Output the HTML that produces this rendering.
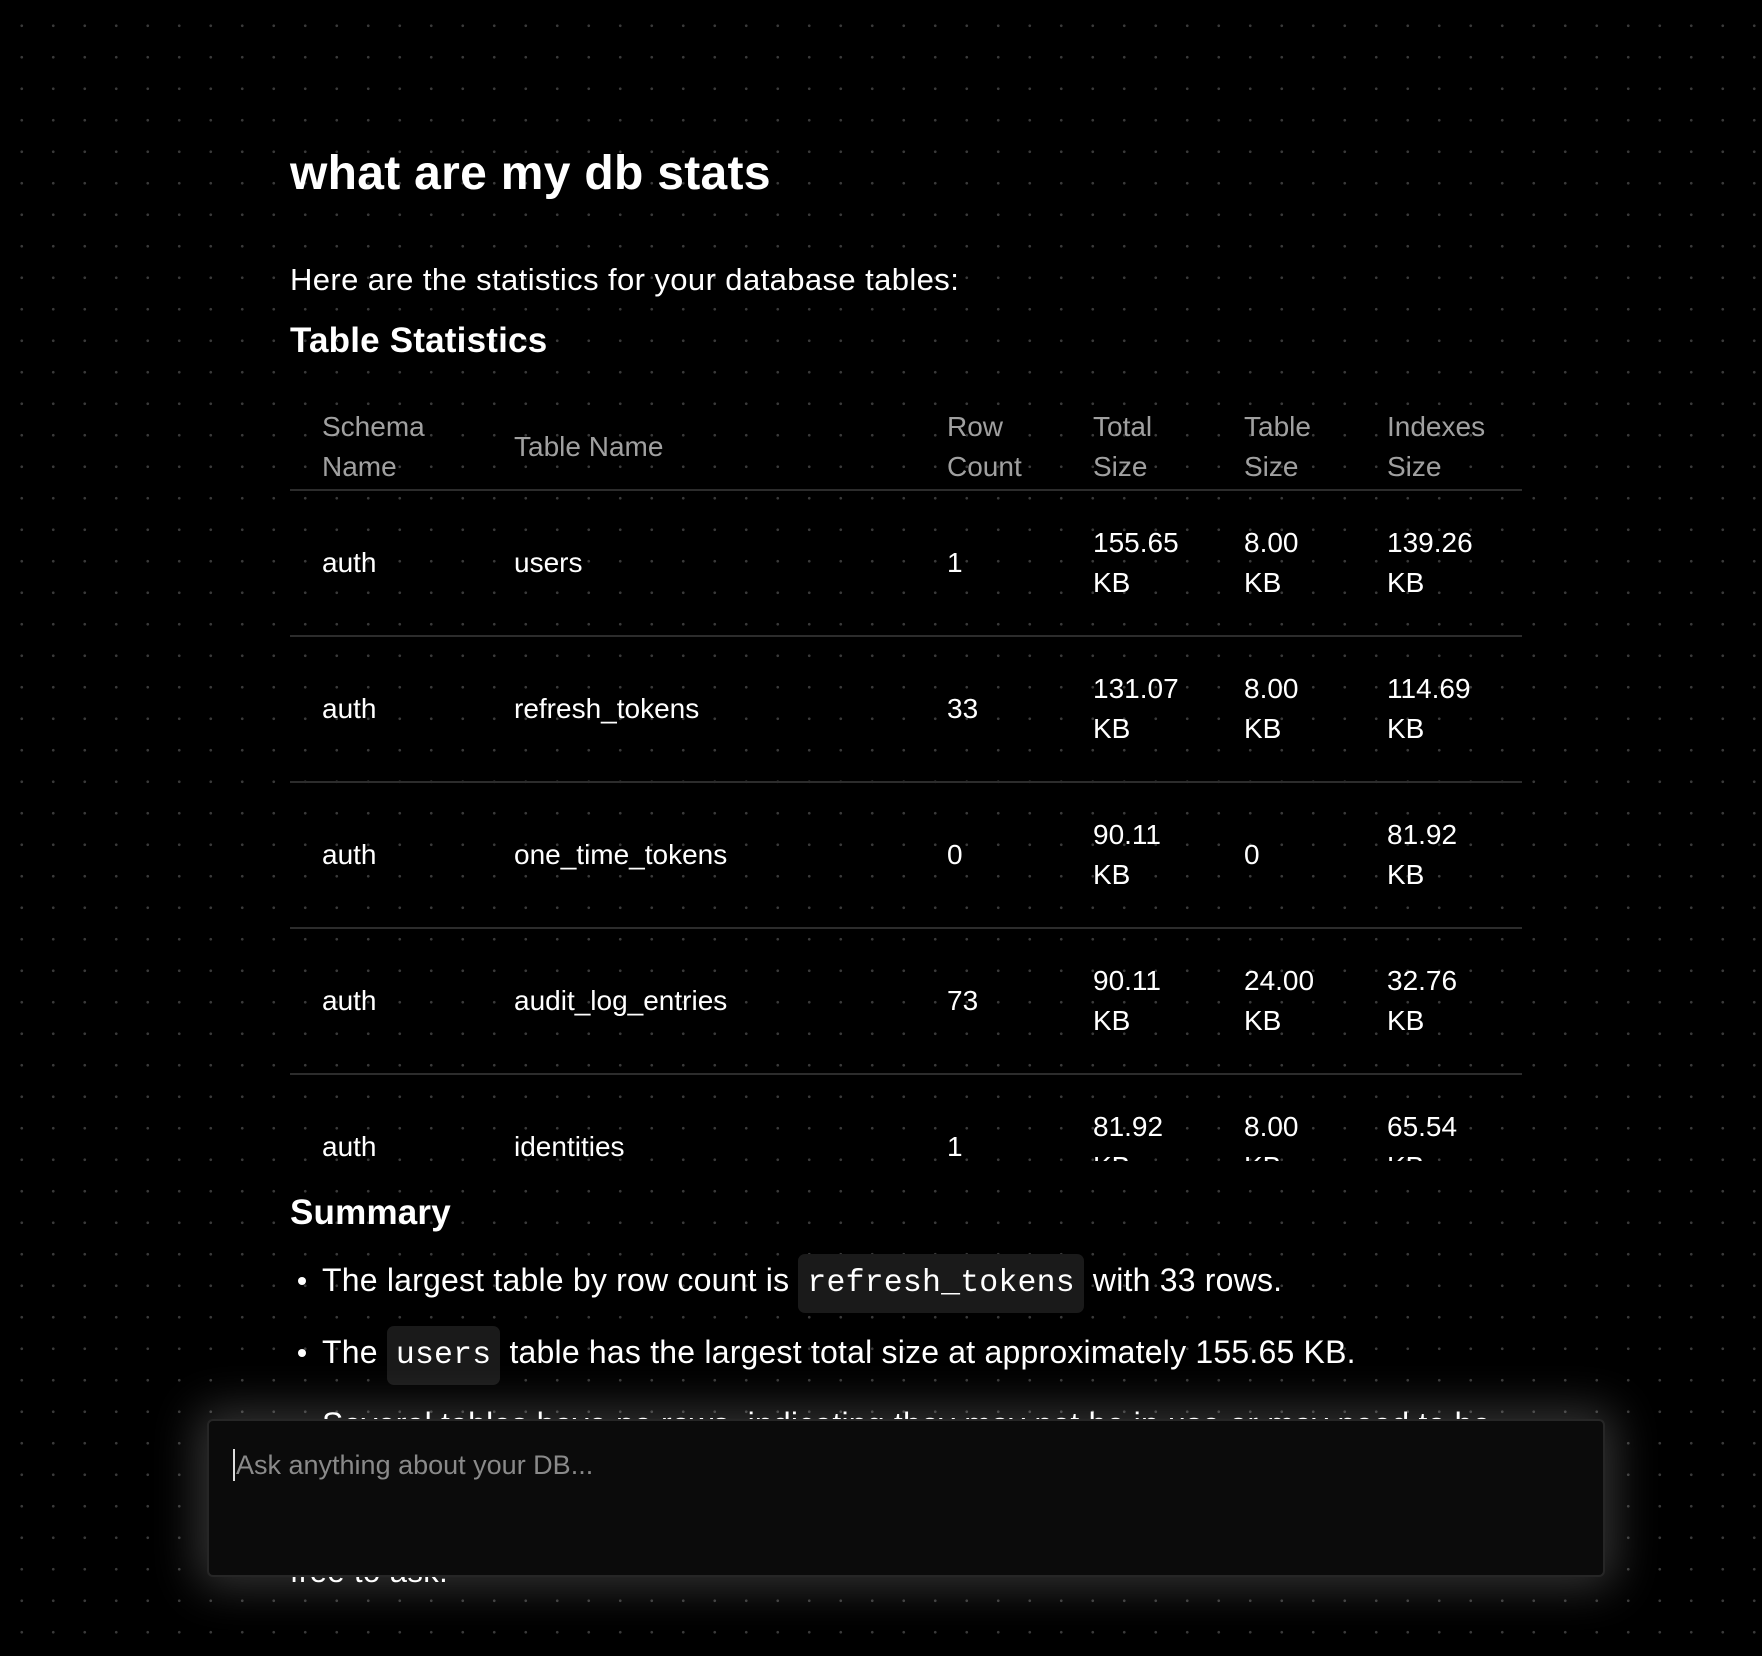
<!DOCTYPE html>
<html><head><meta charset="utf-8"><style>
*{margin:0;padding:0;box-sizing:border-box}
body{width:1762px;height:1656px;overflow:hidden;background:#000;background-image:radial-gradient(circle,#3a3a3a 1.1px,transparent 1.6px);background-size:31.5px 31.5px;background-position:6px 10px;font-family:"Liberation Sans",sans-serif;color:#fff;position:relative}
.a{position:absolute;white-space:nowrap}
h1{position:absolute;left:290px;top:146px;font-size:48px;font-weight:bold;letter-spacing:0.3px}
.p{font-size:31px;letter-spacing:0.4px}
.h{font-size:35px;font-weight:bold;letter-spacing:0.2px}
.tw{position:absolute;left:290px;top:404px;width:1232px;height:757px;overflow:hidden}
table{border-collapse:collapse;table-layout:fixed;width:1232px;font-size:28px}
td,th{padding:0 0 0 32px;text-align:left;vertical-align:middle;line-height:40px}
th{color:#a0a0a0;font-weight:normal;height:86px;border-bottom:2px solid #2c2c2c}
td{height:146px;border-bottom:2px solid #2c2c2c}
code{font-family:"Liberation Mono",monospace;background:#1a1a1a;border-radius:7px;padding:12px 9px;font-size:31.5px}
ul{position:absolute;left:290px;top:1256px;list-style:none;font-size:32px;width:1260px;letter-spacing:0.2px}
li{position:relative;padding-left:32px;height:72px;line-height:48px;white-space:nowrap}
li:before{content:"";position:absolute;left:8px;top:21px;width:8px;height:8px;border-radius:50%;background:#fff}
.box{position:absolute;left:207px;top:1419px;width:1398px;height:158px;background:#0b0b0b;border:2px solid #262626;border-radius:6px;box-shadow:0 0 45px 10px rgba(255,255,255,0.2)}
.ph{position:absolute;left:24px;top:28px;font-size:27px;color:#8a8a8a;border-left:2px solid #ddd;padding-left:1px;line-height:32px}
</style></head><body>
<h1>what are my db stats</h1>
<div class="a p" style="left:290px;top:262px">Here are the statistics for your database tables:</div>
<div class="a h" style="left:290px;top:321px">Table Statistics</div>
<div class="tw"><table>
<colgroup><col style="width:192px"><col style="width:433px"><col style="width:146px"><col style="width:151px"><col style="width:143px"><col style="width:167px"></colgroup>
<tr><th>Schema<br>Name</th><th>Table Name</th><th>Row<br>Count</th><th>Total<br>Size</th><th>Table<br>Size</th><th>Indexes<br>Size</th></tr>
<tr><td>auth</td><td>users</td><td>1</td><td>155.65<br>KB</td><td>8.00<br>KB</td><td>139.26<br>KB</td></tr>
<tr><td>auth</td><td>refresh_tokens</td><td>33</td><td>131.07<br>KB</td><td>8.00<br>KB</td><td>114.69<br>KB</td></tr>
<tr><td>auth</td><td>one_time_tokens</td><td>0</td><td>90.11<br>KB</td><td>0</td><td>81.92<br>KB</td></tr>
<tr><td>auth</td><td>audit_log_entries</td><td>73</td><td>90.11<br>KB</td><td>24.00<br>KB</td><td>32.76<br>KB</td></tr>
<tr><td>auth</td><td>identities</td><td>1</td><td>81.92<br>KB</td><td>8.00<br>KB</td><td>65.54<br>KB</td></tr>
</table></div>
<div class="a h" style="left:290px;top:1193px">Summary</div>
<ul>
<li>The largest table by row count is <code>refresh_tokens</code> with 33 rows.</li>
<li>The <code>users</code> table has the largest total size at approximately 155.65 KB.</li>
<li>Several tables have no rows, indicating they may not be in use or may need to be</li>
</ul>
<div class="a p" style="left:290px;top:1554px">free to ask.</div>
<div class="box"><div class="ph">Ask anything about your DB...</div></div>
</body></html>
